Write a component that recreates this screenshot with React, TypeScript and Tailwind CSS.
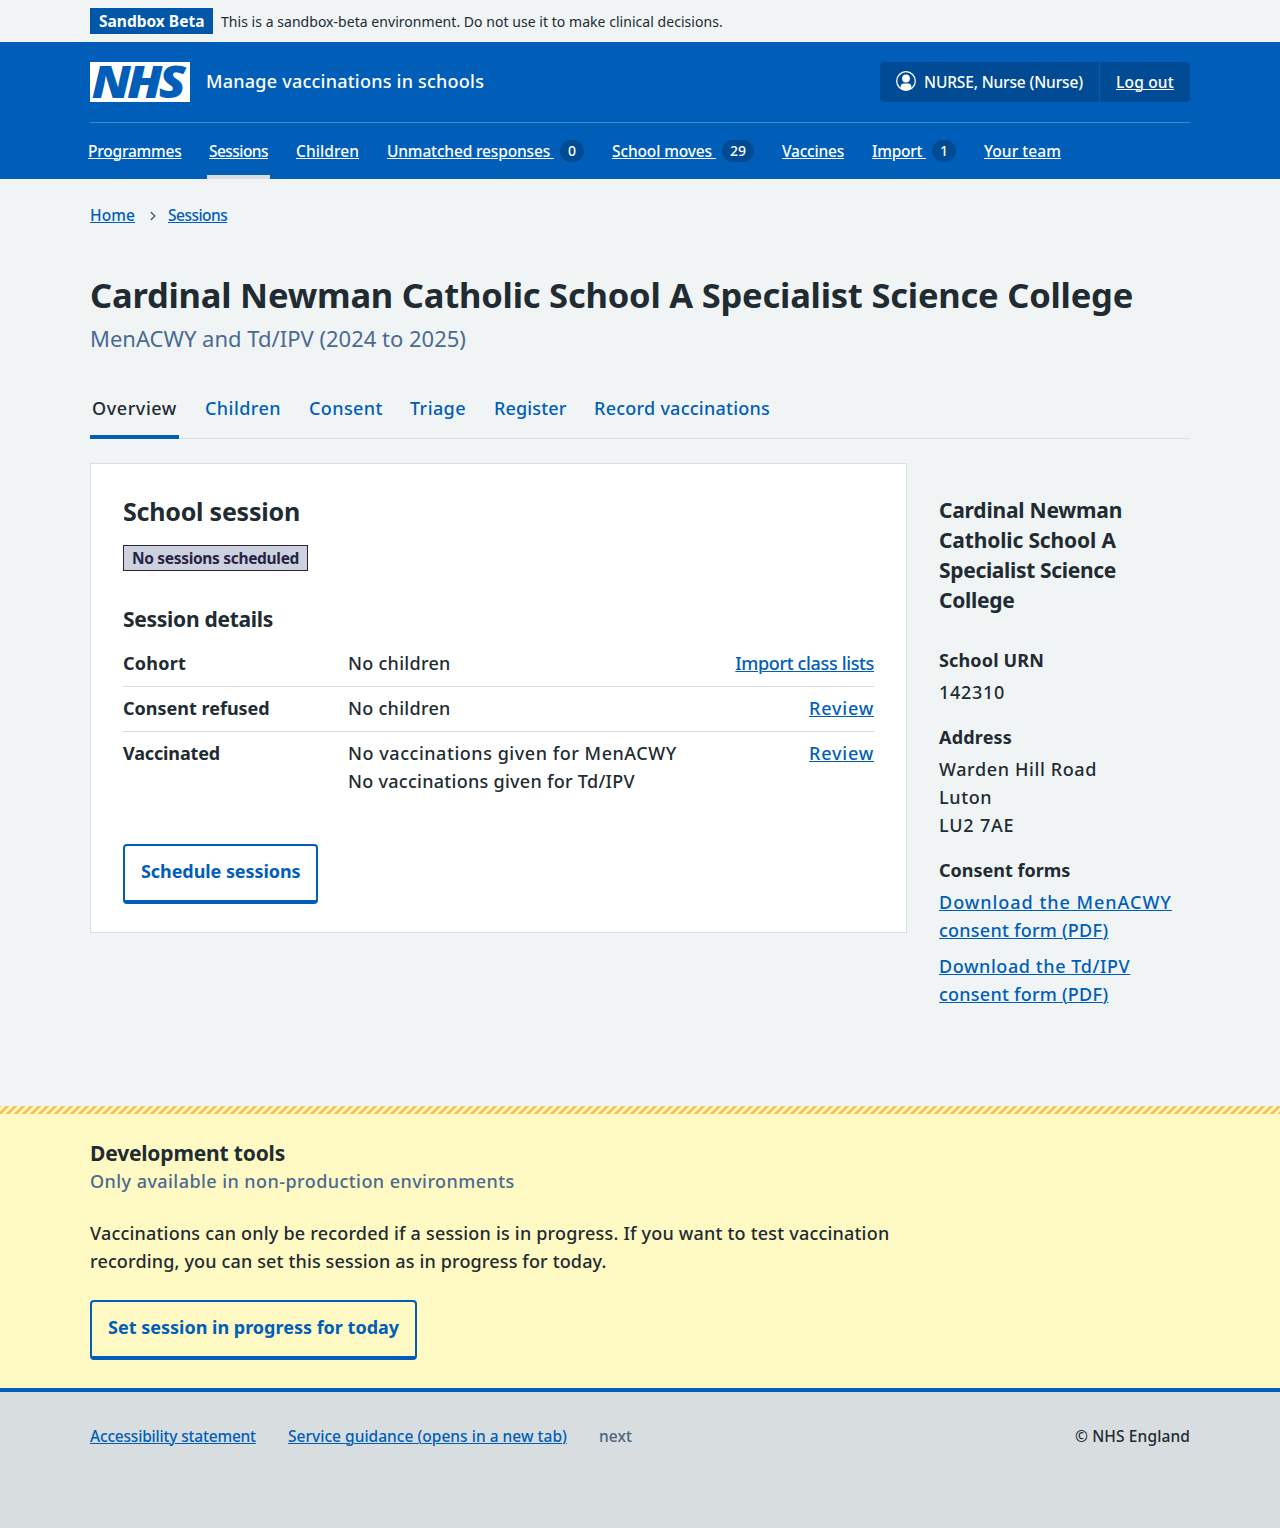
import type { ReactNode } from "react";

const link = "text-[#005eb8] underline decoration-1 underline-offset-1";

const navItems = [
  { label: "Programmes", className: "w-[97px] tracking-[-0.22px]" },
  { label: "Sessions", className: "w-[63px] tracking-[-0.55px]", current: true },
  { label: "Children", className: "w-[67px] tracking-[0.08px]" },
  { label: "Unmatched responses ", className: "w-[201px] tracking-[-0.15px]", count: 0 },
  { label: "School moves ", className: "w-[146px] tracking-[-0.12px]", count: 29 },
  { label: "Vaccines", className: "w-[66px] tracking-[-0.21px]" },
  { label: "Import ", className: "w-[88px] tracking-[-0.26px]", count: 1 },
  { label: "Your team", className: "w-[81px] tracking-[0.06px]" },
];

const tabs = [
  { label: "Overview", className: "w-[89px] tracking-[0.57px]", current: true },
  { label: "Children", className: "w-[80px] tracking-[0.44px]" },
  { label: "Consent", className: "w-[77px] tracking-[0.4px]" },
  { label: "Triage", className: "w-[60px] tracking-[0.4px]" },
  { label: "Register", className: "w-[76px] tracking-[0.15px]" },
  { label: "Record vaccinations", className: "tracking-[0.25px]" },
];

function Container({ children, className = "" }: { children: ReactNode; className?: string }) {
  return <div className={`mx-auto w-[1100px] ${className}`}>{children}</div>;
}

function Logo() {
  return (
    <svg width="100" height="40" viewBox="0 0 100 40" role="img" aria-label="NHS" className="shrink-0 overflow-visible">
      <rect width="100" height="40" fill="#fff" />
      <text
        transform="scale(1.1 1)"
        x="1.5 33.6 62.4"
        y="36"
        fill="#005eb8"
        fontFamily="'Open Sans', sans-serif"
        fontWeight="800"
        fontStyle="italic"
        fontSize="45"
      >
        NHS
      </text>
    </svg>
  );
}

function UserIcon() {
  return (
    <svg width="20" height="20" viewBox="0 0 20 20" className="mb-0.5 shrink-0" aria-hidden="true">
      <circle cx="10" cy="10" r="9.3" fill="none" stroke="#fff" strokeWidth="1.3" />
      <circle cx="10" cy="7.5" r="3.9" fill="#fff" />
      <path d="M4.7 17.4V15.6a3.2 3.2 0 0 1 3.2-3.2h4.2a3.2 3.2 0 0 1 3.2 3.2v1.8A9.4 9.4 0 0 1 10 19.6a9.4 9.4 0 0 1-5.3-2.2Z" fill="#fff" />
    </svg>
  );
}

function Button({ children, className }: { children: ReactNode; className: string }) {
  return (
    <button
      className={`block h-[60px] rounded border-2 border-b-4 border-[#005eb8] px-4 pt-[11px] pb-[15px] text-left text-[18px] leading-7 font-bold whitespace-nowrap text-[#005eb8] ${className}`}
    >
      {children}
    </button>
  );
}

function Row({ label, children, action, last }: { label: ReactNode; children: ReactNode; action: ReactNode; last?: boolean }) {
  return (
    <div className={`flex pt-[7px] pb-[9px] ${last ? "" : "border-b border-[#d8dde0]"}`}>
      <dt className="w-[225px] font-bold">{label}</dt>
      <dd className="flex-1 tracking-[0.28px]">{children}</dd>
      <dd>{action}</dd>
    </div>
  );
}

export default function App() {
  return (
    <div className="min-h-[1528px] bg-[#f0f4f5] font-['Noto_Sans',sans-serif] text-[18px] leading-7 font-medium text-[#212b32]">
      <Container className="flex h-[42px] items-baseline pt-2">
        <strong className="h-[26px] w-[123px] bg-[#0056a7] py-px pl-[9px] text-[15.5px] leading-6 font-bold whitespace-nowrap text-white">
          Sandbox Beta
        </strong>
        <span className="ml-2 text-[14px] leading-[19px] font-normal tracking-[0.04px] whitespace-nowrap">
          This is a sandbox-beta environment. Do not use it to make clinical decisions.
        </span>
      </Container>

      <header className="bg-[#005eb8] text-white">
        <Container>
          <div className="flex items-center border-b border-[#3d8bc9] py-5">
            <Logo />
            <span className="ml-4 pb-0.5 tracking-[0.23px]">Manage vaccinations in schools</span>
            <div className="ml-auto flex h-10 overflow-hidden rounded text-[15.5px] leading-6">
              <div className="flex w-[219px] items-center gap-2 bg-[#004b93] pl-4 tracking-[-0.15px] whitespace-nowrap">
                <UserIcon />
                NURSE, Nurse (Nurse)
              </div>
              <div className="flex w-[91px] items-center border-l border-[#005eb8] bg-[#004b93] pl-4 tracking-[0.2px]">
                <a className="whitespace-nowrap underline decoration-1 underline-offset-1">Log out</a>
              </div>
            </div>
          </div>
          <nav className="-ml-1 flex gap-6 text-[15.5px] leading-6">
            {navItems.map((item) => (
              <a
                key={item.label}
                className={`flex h-14 shrink-0 items-start border-b-4 px-0.5 pt-4 whitespace-pre ${item.current ? "border-[#d8dde0]" : "border-transparent"} ${item.className}`}
              >
                <span className="underline decoration-1 underline-offset-1">{item.label}</span>
                {item.count !== undefined && (
                  <span className="mt-px ml-1.5 h-[22px] rounded-full bg-[#004b93] px-2 text-[14px] leading-[22px] tracking-normal">
                    {item.count}
                  </span>
                )}
              </a>
            ))}
          </nav>
        </Container>
      </header>

      <Container className="pt-6 pb-[98px]">
        <div className="flex items-center text-[15.5px] leading-6">
          <a className={`w-[45px] tracking-[0.08px] ${link}`}>Home</a>
          <svg width="33" height="12" viewBox="0 0 33 12" className="mt-0.5" aria-hidden="true">
            <path d="m15.8 2 4 4-4 4" fill="none" stroke="#4c6272" strokeWidth="1.5" />
          </svg>
          <a className={`tracking-[-0.52px] ${link}`}>Sessions</a>
        </div>

        <h1 className="mt-[45px] text-[34.5px] leading-[45px] font-bold tracking-[-0.21px] whitespace-nowrap">
          Cardinal Newman Catholic School A Specialist Science College
        </h1>
        <p className="mt-1.5 text-[22px] leading-[30px] font-normal text-[#4a6a92]">MenACWY and Td/IPV (2024 to 2025)</p>

        <nav className="mt-[41px] flex gap-6 border-b border-[#d8dde0]">
          {tabs.map((tab) => (
            <a
              key={tab.label}
              className={`-mb-px border-b-4 px-0.5 pb-[13px] whitespace-nowrap ${tab.current ? "border-[#005eb8]" : "border-transparent text-[#005eb8]"} ${tab.className}`}
            >
              {tab.label}
            </a>
          ))}
        </nav>

        <div className="mt-6 flex items-start gap-8">
          <section className="w-[817px] shrink-0 border border-[#d8dde0] bg-white px-8 pt-[31px] pb-7">
            <h2 className="text-[25px] leading-8 font-bold tracking-[-0.22px]">School session</h2>
            <strong className="mt-[18px] block h-[26px] w-[185px] border border-[#2d2340] bg-[#ccd3df] pl-2 text-[15.5px] leading-6 font-bold tracking-[-0.32px] whitespace-nowrap text-[#2a2347]">
              No sessions scheduled
            </strong>
            <h3 className="mt-8 text-[21px] leading-8 font-bold tracking-[-0.28px]">Session details</h3>
            <dl className="mt-[7px]">
              <Row
                label={<span className="tracking-[0.23px]">Cohort</span>}
                action={<a className={`tracking-[-0.35px] ${link}`}>Import class lists</a>}
              >
                No children
              </Row>
              <Row label="Consent refused" action={<a className={`tracking-[0.8px] ${link}`}>Review</a>}>
                No children
              </Row>
              <Row
                label={<span className="tracking-[-0.15px]">Vaccinated</span>}
                action={<a className={`tracking-[0.8px] ${link}`}>Review</a>}
                last
              >
                <p className="tracking-[0.54px]">No vaccinations given for MenACWY</p>
                <p>No vaccinations given for Td/IPV</p>
              </Row>
            </dl>
            <Button className="mt-10 w-[195px] tracking-[-0.07px]">Schedule sessions</Button>
          </section>

          <aside className="w-[251px] pt-8">
            <h2 className="text-[21px] leading-[30px] font-bold">
              <span className="tracking-[-0.22px]">Cardinal Newman</span>
              <br />
              <span className="tracking-[-0.15px]">Catholic School A</span>
              <br />
              <span className="tracking-[-0.33px]">Specialist Science</span>
              <br />
              <span className="tracking-[-0.28px]">College</span>
            </h2>
            <dl className="mt-[31px]">
              <dt className="font-bold tracking-[0.15px]">School URN</dt>
              <dd className="mt-1 tracking-[0.7px]">142310</dd>
              <dt className="mt-[17px] font-bold tracking-[0.19px]">Address</dt>
              <dd className="mt-1 tracking-[0.62px]">
                Warden Hill Road
                <br />
                Luton
                <br />
                <span className="tracking-[0.8px]">LU2 7AE</span>
              </dd>
              <dt className="mt-[17px] font-bold">Consent forms</dt>
              <dd className="mt-1">
                <a className={link}>
                  <span className="tracking-[0.98px]">Download the MenACWY</span>
                  <br />
                  <span className="tracking-[0.24px]">consent form (PDF)</span>
                </a>
              </dd>
              <dd className="mt-2">
                <a className={link}>
                  <span className="tracking-[0.58px]">Download the Td/IPV</span>
                  <br />
                  <span className="tracking-[0.24px]">consent form (PDF)</span>
                </a>
              </dd>
            </dl>
          </aside>
        </div>
      </Container>

      <section className="bg-[#fff9c4] pb-7">
        <div className="h-2 bg-[linear-gradient(-45deg,#f7c15c_25%,#fff9c4_25%,#fff9c4_50%,#f7c15c_50%,#f7c15c_75%,#fff9c4_75%)] bg-[length:8px_8px] bg-position-[1px_0px]" />
        <Container className="pt-[23px]">
          <h2 className="h-[30px] text-[21px] leading-8 font-bold tracking-[-0.18px]">Development tools</h2>
          <p className="tracking-[0.44px] text-[#4a6a92]">Only available in non-production environments</p>
          <p className="mt-6 whitespace-nowrap">
            <span className="tracking-[0.2px]">
              Vaccinations can only be recorded if a session is in progress. If you want to test vaccination
            </span>
            <br />
            <span className="tracking-[0.15px]">recording, you can set this session as in progress for today.</span>
          </p>
          <Button className="mt-[25px] w-[327px]">Set session in progress for today</Button>
        </Container>
      </section>

      <footer className="h-[140px] border-t-4 border-[#005eb8] bg-[#d8dde0] pt-8 text-[15.5px] leading-6">
        <Container className="flex gap-8 whitespace-nowrap">
          <a className={`w-[166px] tracking-[-0.19px] ${link}`}>Accessibility statement</a>
          <a className={`w-[279px] tracking-[0.02px] ${link}`}>Service guidance (opens in a new tab)</a>
          <span className="tracking-[0.1px] text-[#4a6480]">next</span>
          <span className="ml-auto tracking-[0.12px]">© NHS England</span>
        </Container>
      </footer>
    </div>
  );
}
